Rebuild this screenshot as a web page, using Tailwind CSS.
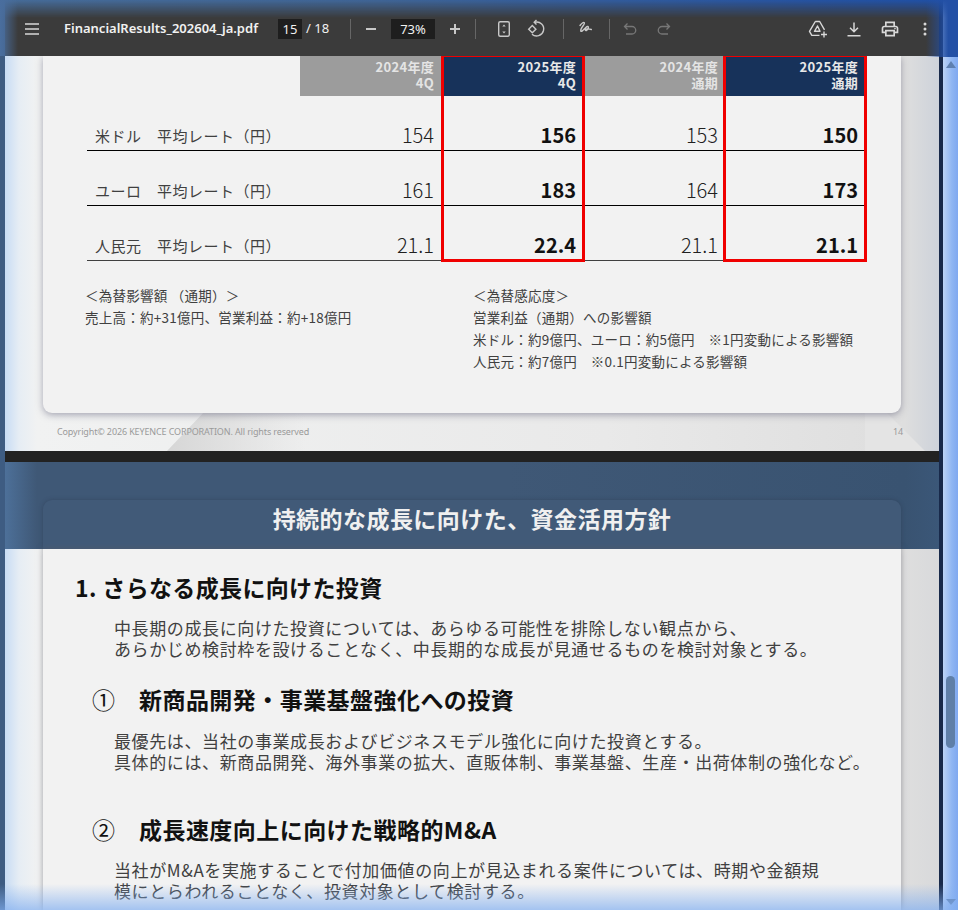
<!DOCTYPE html>
<html lang="ja">
<head>
<meta charset="utf-8">
<script src="https://cdn.jsdelivr.net/npm/@tailwindcss/browser@4"></script>
<title>FinancialResults_202604_ja.pdf</title>
</head>
<body class="relative flex w-[958px] h-[910px] overflow-hidden bg-[#222222] font-['Noto_Sans_CJK_JP','Noto_Sans',sans-serif]">
  <div class="w-[5px] shrink-0 bg-[#3e5c82]"></div>

  <main class="w-[934px] shrink-0 flex flex-col">
    <!-- toolbar -->
    <header class="relative z-10 flex items-center h-[56px] shrink-0 pt-[1px] bg-[#3b3b3b] text-[#f1f1f1] font-['Noto_Sans',sans-serif]">
      <svg class="ml-[20px] w-[14px] h-[12px]" viewBox="0 0 14 12" fill="none" stroke="#d8d8d8" stroke-width="1.3"><path d="M0 1h14M0 6h14M0 11h14"/></svg>
      <span class="ml-[25px] w-[214px] text-[13px] font-semibold whitespace-nowrap">FinancialResults_202604_ja.pdf</span>
      <span class="w-[24px] h-[20px] bg-[#1e1e1e] text-center text-[13px] leading-[20px]">15</span>
      <span class="ml-[4px] w-[44px] text-[13px] whitespace-nowrap">/ 18</span>
      <span class="w-px h-[20px] bg-[#666666]"></span>
      <svg class="ml-[15px] w-[10px] h-[2px]" viewBox="0 0 10 2"><rect width="10" height="2" fill="#c8c8c8"/></svg>
      <span class="ml-[15px] w-[44px] h-[20px] bg-[#1e1e1e] text-center text-[13px] leading-[20px]">73%</span>
      <svg class="ml-[15px] w-[10px] h-[10px]" viewBox="0 0 10 10" fill="#c8c8c8"><path d="M4 0h2v4h4v2H6v4H4V6H0V4h4z"/></svg>
      <span class="ml-[15px] w-px h-[20px] bg-[#666666]"></span>

      <svg class="ml-[18px] w-[20px] h-[20px]" viewBox="0 0 20 20" fill="none" stroke="#c8c8c8" stroke-width="1.4"><rect x="4.700" y="2.700" width="10.600" height="14.600" rx="1.500"/><path d="M8.300 7.500l1.700-2 1.700 2zM8.300 12.500l1.700 2 1.700-2z" fill="#c8c8c8" stroke="none"/></svg>
      <svg class="ml-[12px] w-[20px] h-[20px]" viewBox="0 0 20 20" fill="none" stroke="#c8c8c8" stroke-width="1.4"><path d="M9 3.200a7 7 0 1 1-3 12"/><path d="M10.500 1L8.200 3.300l2.300 2.300"/><path d="M6.300 6.600l3.600 3.600-3.600 3.600-3.600-3.600z"/></svg>
      <span class="ml-[17px] w-px h-[20px] bg-[#666666]"></span>
      <svg class="ml-[12px] w-[20px] h-[20px]" viewBox="0 0 20 20" fill="none" stroke="#c8c8c8" stroke-width="1.400" stroke-linecap="round" stroke-linejoin="round"><path d="M4 6.500c1.500-2.300 3.500-3.500 4.300-2.700 1.200 1.200-4.300 5.500-3.500 8.200.5 1.500 3-1.500 5-3.500 1.500-1.500 3-1.500 2.500.5-.4 1.500-2.500 3.500-3 2-.4-1.200 3-1.500 6-.5"/></svg>
      <span class="ml-[13px] w-px h-[20px] bg-[#666666]"></span>
      <svg class="ml-[12px] w-[16px] h-[16px]" viewBox="0 0 16 16" fill="none" stroke="#777777" stroke-width="1.3"><path d="M5.500 2.500L2.500 5.500l3 3M2.500 5.500h7.500a3.500 3.500 0 0 1 0 7.500H4"/></svg>
      <svg class="ml-[18px] w-[16px] h-[16px]" viewBox="0 0 16 16" fill="none" stroke="#777777" stroke-width="1.3"><path d="M10.500 2.500l3 3-3 3M13.500 5.500H6a3.500 3.500 0 0 0 0 7.500h6"/></svg>

      <svg class="ml-[136px] w-[20px] h-[20px]" viewBox="0 0 20 20" fill="none" stroke="#d8d8d8" stroke-width="1.400" stroke-linejoin="round"><path d="M7.300 2.500h4.400l4.800 8.300M7.300 2.500L1.500 12.400l2.300 4h7.700M9.500 7l-3 5.300h5.500z"/><path d="M16 12.500v6M13 15.500h6"/></svg>
      <svg class="ml-[17px] w-[18px] h-[18px]" viewBox="0 0 18 18" fill="none" stroke="#d8d8d8" stroke-width="1.500"><path d="M9 2.500v9M5 7.800L9 11.800l4-4M2.500 15.700h13"/></svg>
      <svg class="ml-[17px] w-[20px] h-[20px]" viewBox="0 0 24 24" fill="#d8d8d8"><path d="M19 8h-1V3H6v5H5c-1.660 0-3 1.340-3 3v6h4v4h12v-4h4v-6c0-1.660-1.340-3-3-3zM8 5h8v3H8V5zm8 12v2H8v-4h8v2zm2-2v-2H6v2H4v-4c0-.55.45-1 1-1h14c.55 0 1 .45 1 1v4h-2z"/><circle cx="18" cy="11.500" r="1"/></svg>
      <svg class="ml-[23px] w-[4px] h-[14px]" viewBox="0 0 4 14" fill="#d8d8d8"><circle cx="2" cy="2" r="1.500"/><circle cx="2" cy="7" r="1.500"/><circle cx="2" cy="12" r="1.500"/></svg>
    </header>

    <!-- page 14 -->
    <section class="relative h-[395px] shrink-0 overflow-hidden bg-[linear-gradient(90deg,#c8dcf4_0,#e6edf4_14px,#f1f2f2_32px,#e9e9e9_600px,#dedede_900px,#cdd2da_934px)]">
      <svg class="absolute left-0 bottom-0 w-[934px] h-[40px]" viewBox="0 0 934 40" fill="none">
        <defs>
          <linearGradient id="sheen" x1="162" y1="20" x2="300" y2="20" gradientUnits="userSpaceOnUse"><stop offset="0" stop-color="#d6d6d6"/><stop offset="1" stop-color="#d6d6d6" stop-opacity="0"/></linearGradient>
        </defs>
        <path d="M162 40L200 0H400V40z" fill="url(#sheen)"/>
        <path d="M882 2L920 40H860V2z" fill="#e4e4e4"/>
      </svg>
      <div class="relative ml-[38px] w-[858px] h-[357px] pl-[44px] pr-[35px] bg-[#f2f2f2] rounded-b-[9px] shadow-[0_2px_7px_rgba(90,90,115,0.5)]">
        <div class="grid grid-cols-[213px_141px_142px_142px_140px]">
          <div class="h-[40px]"></div>
          <div class="h-[40px] pr-[7px] pt-[3px] text-right text-[13px] tracking-[0.3px] leading-[16px] font-bold text-[#e4e4e4] bg-[#9c9c9c]">2024年度<br>4Q</div>
          <div class="h-[40px] pr-[7px] pt-[3px] text-right text-[13px] tracking-[0.3px] leading-[16px] font-bold text-[#e8e8e8] bg-[#17325a]">2025年度<br>4Q</div>
          <div class="h-[40px] pr-[7px] pt-[3px] text-right text-[13px] tracking-[0.3px] leading-[16px] font-bold text-[#e4e4e4] bg-[#9c9c9c]">2024年度<br>通期</div>
          <div class="h-[40px] pr-[7px] pt-[3px] text-right text-[13px] tracking-[0.3px] leading-[16px] font-bold text-[#e8e8e8] bg-[#17325a]">2025年度<br>通期</div>

          <div class="h-[55px] pl-[8px] pt-[28px] text-[15px] tracking-[0.5px] leading-[24px] text-[#404040] border-b border-black whitespace-nowrap">米ドル　平均レート（円）</div>
          <div class="h-[55px] pr-[7px] pt-[25px] text-right text-[20px] leading-[28px] font-light text-[#202020] border-b border-black">154</div>
          <div class="h-[55px] pr-[7px] pt-[25px] text-right text-[20px] leading-[28px] font-bold text-[#111111] border-b border-black">156</div>
          <div class="h-[55px] pr-[7px] pt-[25px] text-right text-[20px] leading-[28px] font-light text-[#202020] border-b border-black">153</div>
          <div class="h-[55px] pr-[7px] pt-[25px] text-right text-[20px] leading-[28px] font-bold text-[#111111] border-b border-black">150</div>

          <div class="h-[55px] pl-[8px] pt-[28px] text-[15px] tracking-[0.5px] leading-[24px] text-[#404040] border-b border-black whitespace-nowrap">ユーロ　平均レート（円）</div>
          <div class="h-[55px] pr-[7px] pt-[25px] text-right text-[20px] leading-[28px] font-light text-[#202020] border-b border-black">161</div>
          <div class="h-[55px] pr-[7px] pt-[25px] text-right text-[20px] leading-[28px] font-bold text-[#111111] border-b border-black">183</div>
          <div class="h-[55px] pr-[7px] pt-[25px] text-right text-[20px] leading-[28px] font-light text-[#202020] border-b border-black">164</div>
          <div class="h-[55px] pr-[7px] pt-[25px] text-right text-[20px] leading-[28px] font-bold text-[#111111] border-b border-black">173</div>

          <div class="h-[55px] pl-[8px] pt-[28px] text-[15px] tracking-[0.5px] leading-[24px] text-[#404040] border-b border-[#404040] whitespace-nowrap">人民元　平均レート（円）</div>
          <div class="h-[55px] pr-[7px] pt-[25px] text-right text-[20px] leading-[28px] font-light text-[#202020] border-b border-[#404040]">21.1</div>
          <div class="h-[55px] pr-[7px] pt-[25px] text-right text-[20px] leading-[28px] font-bold text-[#111111] border-b border-[#404040]">22.4</div>
          <div class="h-[55px] pr-[7px] pt-[25px] text-right text-[20px] leading-[28px] font-light text-[#202020] border-b border-[#404040]">21.1</div>
          <div class="h-[55px] pr-[7px] pt-[25px] text-right text-[20px] leading-[28px] font-bold text-[#111111] border-b border-[#404040]">21.1</div>
        </div>
        <!-- red highlight frames -->
        <div class="absolute left-[398px] top-[-2px] w-[144px] h-[208px] border-[3px] border-[#f00000]"></div>
        <div class="absolute left-[680px] top-[-2px] w-[144px] h-[208px] border-[3px] border-[#f00000]"></div>

        <div class="flex mt-[23px] text-[13.500px] tracking-[0.25px] leading-[22px] text-[#404040] whitespace-nowrap">
          <div class="ml-[-2px] w-[388px]">
            <p>＜為替影響額 （通期）＞</p>
            <p>売上高：約+31億円、営業利益：約+18億円</p>
          </div>
          <div>
            <p>＜為替感応度＞</p>
            <p>営業利益（通期）への影響額</p>
            <p>米ドル：約9億円、ユーロ：約5億円　※1円変動による影響額</p>
            <p>人民元：約7億円　※0.1円変動による影響額</p>
          </div>
        </div>
      </div>
      <div class="relative flex justify-between ml-[52px] w-[846px] mt-[13px] text-[9px] tracking-[-0.13px] leading-[12px] text-[#9a9a9a] font-['Noto_Sans',sans-serif]">
        <span>Copyright© 2026 KEYENCE CORPORATION. All rights reserved</span>
        <span>14</span>
      </div>
    </section>

    <div class="h-[11px] shrink-0 bg-[#222222]"></div>

    <!-- page 15 -->
    <section class="relative flex-1 overflow-hidden bg-[linear-gradient(90deg,#c8dcf4_0,#e6edf4_14px,#f1f2f2_32px,#e6e6e6_600px,#dedede_900px,#d8d9db_934px)]">
      <div class="h-[87px] pt-[38px] pl-[38px] bg-[linear-gradient(90deg,#4d7099_0,#3f5876_32px,#3f5876_500px,#395371_900px,#3b5778_934px)]">
        <h1 class="w-[858px] h-[49px] rounded-t-[9px] bg-[#415a78] text-center text-[23px] tracking-[0.45px] leading-[36px] font-bold text-[#f0f0f0] shadow-[0_0_4px_rgba(40,50,70,0.4)]">持続的な成長に向けた、資金活用方針</h1>
      </div>
      <div class="ml-[38px] w-[858px] h-[361px] pl-[33px] pr-[20px] pt-[23px] bg-[#f2f2f2] shadow-[0_0_6px_rgba(90,90,100,0.55)] whitespace-nowrap">
        <h2 class="ml-[-1px] text-[23px] tracking-[0.35px] leading-[30px] font-bold text-[#111111]">1. さらなる成長に向けた投資</h2>
        <p class="mt-[15px] ml-[38px] text-[17px] tracking-[0.61px] leading-[21px] text-[#404040]">中長期の成長に向けた投資については、あらゆる可能性を排除しない観点から、<br>あらかじめ検討枠を設けることなく、中長期的な成長が見通せるものを検討対象とする。</p>
        <h3 class="flex mt-[25px] ml-[16px] text-[23px] tracking-[0.45px] leading-[30px] font-bold text-[#111111]"><span class="w-[47px] font-normal">①</span>新商品開発・事業基盤強化への投資</h3>
        <p class="mt-[16px] ml-[38px] text-[17px] tracking-[0.61px] leading-[21px] text-[#404040]">最優先は、当社の事業成長およびビジネスモデル強化に向けた投資とする。<br>具体的には、新商品開発、海外事業の拡大、直販体制、事業基盤、生産・出荷体制の強化など。</p>
        <h3 class="flex mt-[42px] ml-[16px] text-[23px] tracking-[0.45px] leading-[30px] font-bold text-[#111111]"><span class="w-[47px] font-normal">②</span>成長速度向上に向けた戦略的M&amp;A</h3>
        <p class="mt-[15px] ml-[38px] text-[17px] tracking-[0.61px] leading-[21px] text-[#404040]">当社がM&amp;Aを実施することで付加価値の向上が見込まれる案件については、時期や金額規<br>模にとらわれることなく、投資対象として検討する。</p>
      </div>
    </section>
  </main>

  <div class="w-[4px] shrink-0 bg-[#18294a]"></div>

  <!-- scrollbar -->
  <aside class="relative flex-1 bg-[linear-gradient(90deg,#bcd3f6,#8fb5f2_60%,#7fa8f0)]">
    <div class="mt-[61px] ml-[3px] w-0 h-0 border-x-[5px] border-x-transparent border-b-[7px] border-b-[#5f80b0]"></div>
    <div class="mt-[608px] ml-[3px] w-[9px] h-[72px] rounded-[5px] bg-[#5f7fa8]"></div>
    <div class="mt-[151px] ml-[3px] w-0 h-0 border-x-[5px] border-x-transparent border-t-[6px] border-t-[#5f80b0]"></div>
  </aside>

  <!-- translucent window edge glow -->
  <div class="pointer-events-none absolute z-20 left-0 top-0 w-full h-[18px] bg-[linear-gradient(90deg,#466c99,#3f6597_40%,#2553a3_85%,#1f50a8)] [mask-image:linear-gradient(180deg,#000,transparent)]"></div>
  <div class="pointer-events-none absolute z-20 left-0 top-0 w-[18px] h-[56px] bg-[linear-gradient(90deg,rgba(74,110,158,1),rgba(74,110,158,0))]"></div>
  <div class="pointer-events-none absolute z-20 right-0 top-0 w-[32px] h-[57px] bg-[linear-gradient(90deg,rgba(35,80,165,0),rgba(35,80,165,1)_70%)]"></div>
  <div class="pointer-events-none absolute z-20 left-0 bottom-0 w-full h-[26px] bg-[linear-gradient(180deg,rgba(130,175,240,0),rgba(130,175,240,.7))]"></div>
</body>
</html>
